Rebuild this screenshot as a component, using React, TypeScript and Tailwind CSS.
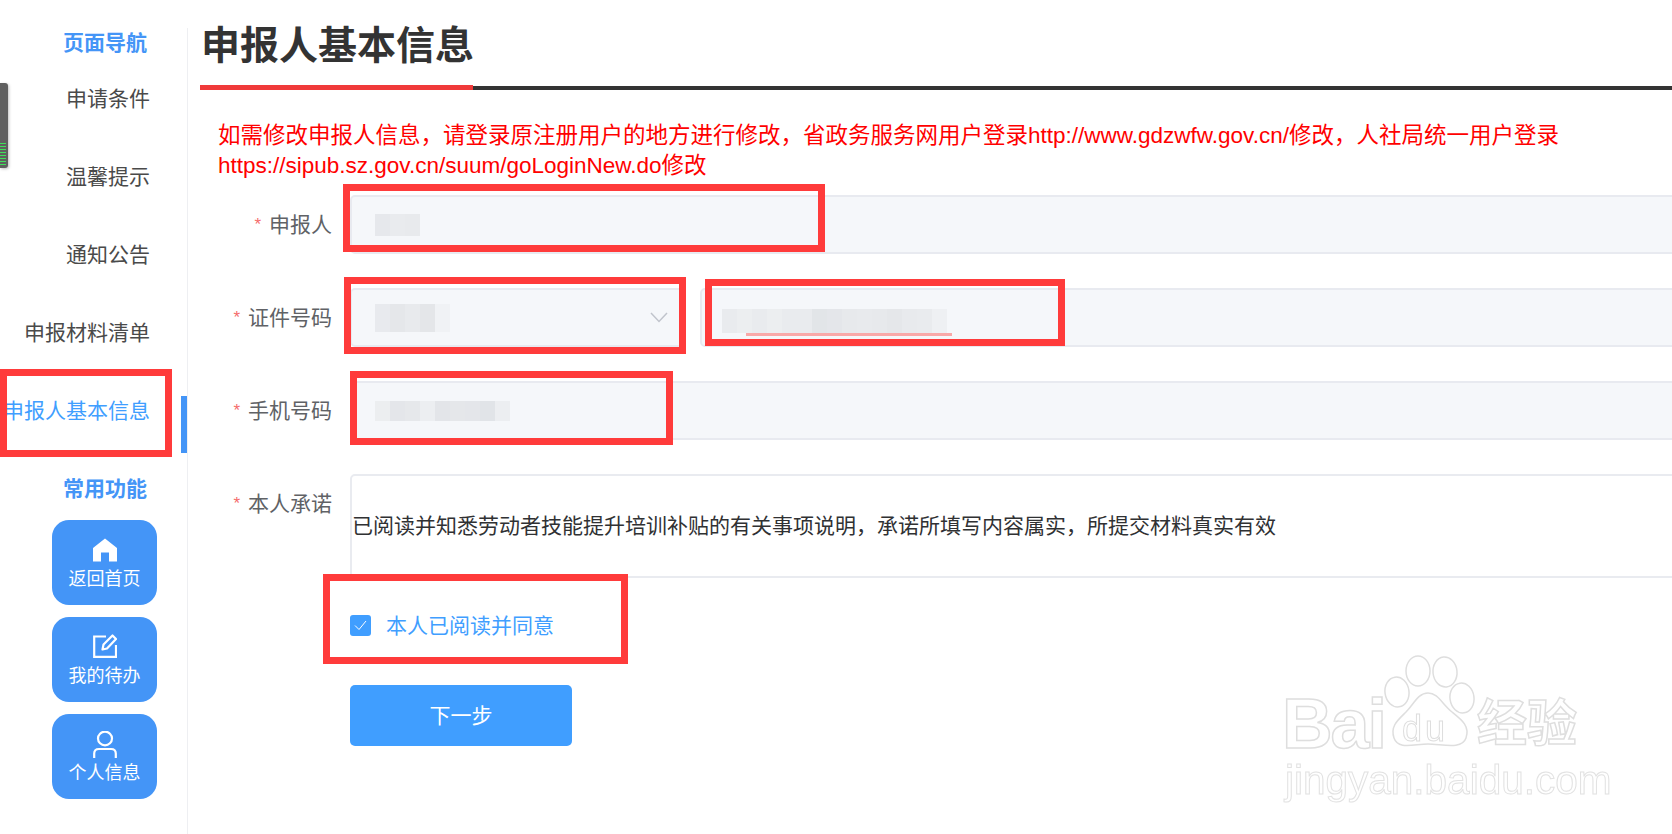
import React from "react";

const FONT = "font-['Liberation_Sans','Noto_Sans_CJK_SC',sans-serif]";

function Frame({ className }: { className: string }) {
  return <div className={`absolute border-[7px] border-[#ff3b3b] pointer-events-none ${className}`} />;
}

function Label({ text }: { text: string }) {
  return (
    <div className="w-[144px] h-[59px] shrink-0 flex items-center justify-end pt-[1px] text-[21px] text-[#606266]">
      <span className="text-[#f56c6c] mr-[8px] text-[17px]">*</span>
      {text}
    </div>
  );
}

function Smudge({ cells, h }: { cells: string[]; h: number }) {
  return (
    <div className="flex blur-[0.6px]" style={{ height: h }}>
      {cells.map((c, i) => (
        <div key={i} className="w-[15px] h-full" style={{ background: c }} />
      ))}
    </div>
  );
}

function Field({ children, className = "" }: { children?: React.ReactNode; className?: string }) {
  return (
    <div className={`h-[59px] bg-[#f5f7fa] border-2 border-[#e8eaf0] rounded-[5px] flex items-center pl-[23px] ${className}`}>
      {children}
    </div>
  );
}

function NavItem({ text, active }: { text: string; active?: boolean }) {
  return (
    <div className={`relative h-[78px] flex items-center justify-end pr-[37px] pt-[2px] text-[21px] ${active ? "text-[#409eff]" : "text-[#4a4a4a]"}`}>
      {text}
      {active && <div className="absolute right-0 top-[25px] w-[6px] h-[57px] bg-[#4495f7]" />}
    </div>
  );
}

function Tool({ text, icon }: { text: string; icon: React.ReactNode }) {
  return (
    <div className="w-[105px] h-[85px] rounded-[17px] bg-[#4495f7] flex flex-col items-center pt-[18px] text-white text-[18px]">
      <div className="h-[24px] flex items-center">{icon}</div>
      <div className="leading-[26px] mt-[4px]">{text}</div>
    </div>
  );
}

const HomeIcon = (
  <svg width="24" height="24" viewBox="0 0 24 24">
    <path fill="#fff" d="M12 0.5 L24 10 V23.5 H16 V14.5 H8 V23.5 H0 V10 Z" />
  </svg>
);

const EditIcon = (
  <svg className="-mt-[2px]" width="24" height="24" viewBox="0 0 24 24" fill="none" stroke="#fff">
    <path strokeWidth="2.2" d="M13 2.5 H1.2 V22.8 H23 V11" />
    <path strokeWidth="2.2" strokeLinejoin="round" d="M9.5 15.5 L10.5 10.5 L19.5 1.5 L23 5 L14 14.5 Z" />
  </svg>
);

const UserIcon = (
  <svg width="24" height="27" viewBox="0 0 24 27" fill="none" stroke="#fff" strokeWidth="2.2">
    <ellipse cx="12" cy="7.5" rx="7" ry="6.8" />
    <path d="M1.2 27 V22.5 Q1.2 18 6 18 H18 Q22.8 18 22.8 22.5 V27" />
  </svg>
);

const OUTLINE = "text-white font-bold font-['Liberation_Sans','Noto_Sans_CJK_SC',sans-serif]";

function Watermark() {
  return (
    <div className="absolute left-[1280px] top-[652px] w-[310px] h-[160px] blur-[0.5px] pointer-events-none">
      <span className={`absolute left-[2px] top-[42px] ${OUTLINE} text-[70px] leading-[60px] tracking-[-2px] [-webkit-text-stroke:1.5px_#dedede]`}>Bai</span>
      <svg className="absolute left-[100px] top-[0px]" width="100" height="100" viewBox="0 0 100 100" fill="#fff" stroke="#dedede" strokeWidth="1.5">
        <ellipse cx="17" cy="40" rx="12" ry="15" transform="rotate(-8 17 40)" />
        <ellipse cx="38" cy="19" rx="12" ry="15" />
        <ellipse cx="65" cy="20" rx="12" ry="15" transform="rotate(-6 65 20)" />
        <ellipse cx="82" cy="46" rx="12" ry="15" transform="rotate(-8 82 46)" />
        <path d="M48 41 C58 41 62 52 72 60 C82 68 90 74 86 86 C82 98 62 92 48 92 C34 92 18 98 14 86 C10 74 18 68 26 60 C34 52 38 41 48 41 Z" />
      </svg>
      <span className={`absolute left-[122px] top-[55px] ${OUTLINE} text-[36px] leading-[44px] font-normal tracking-[3px] [-webkit-text-stroke:1px_#dedede]`}>du</span>
      <span className={`absolute left-[197px] top-[41px] ${OUTLINE} text-[50px] leading-[62px] [-webkit-text-stroke:1.5px_#dedede]`}>经验</span>
      <span className={`absolute left-[5px] top-[103px] ${OUTLINE} text-[40.5px] leading-[50px] font-normal [-webkit-text-stroke:1px_#e2e2e2]`}>jingyan.baidu.com</span>
    </div>
  );
}

export default function App() {
  return (
    <div className={`relative w-[1672px] h-[834px] overflow-hidden bg-white flex ${FONT}`}>
      <aside className="w-[188px] shrink-0 mt-[28px] border-r border-[#eeeff2]">
        <div className="h-[30px] leading-[30px] pl-[63px] text-[21px] font-bold text-[#4495f7]">页面导航</div>
        <div className="mt-[1px]">
          <NavItem text="申请条件" />
          <NavItem text="温馨提示" />
          <NavItem text="通知公告" />
          <NavItem text="申报材料清单" />
          <NavItem text="申报人基本信息" active />
        </div>
        <div className="mt-[25px] h-[30px] leading-[30px] pl-[63px] text-[21px] font-bold text-[#4495f7]">常用功能</div>
        <div className="mt-[16px] ml-[52px] flex flex-col gap-[12px]">
          <Tool text="返回首页" icon={HomeIcon} />
          <Tool text="我的待办" icon={EditIcon} />
          <Tool text="个人信息" icon={UserIcon} />
        </div>
      </aside>

      <main className="flex-1 min-w-0 overflow-hidden">
        <div className="h-[85px] pl-[13px] pt-[16px]">
          <h1 className="text-[39px] leading-[60px] font-bold text-[#333]">申报人基本信息</h1>
        </div>
        <div className="flex items-start pl-[12px]">
          <div className="w-[273px] h-[5px] bg-[#f03a3a]" />
          <div className="flex-1 h-[4px] mt-[1px] bg-[#333]" />
        </div>
        <p className="mt-[31px] ml-[30px] w-[1420px] text-[22.5px] leading-[30px] text-[#ff0000]">
          如需修改申报人信息&#xFF0C;请登录原注册用户的地方进行修改&#xFF0C;省政务服务网用户登录http://www.gdzwfw.gov.cn/修改&#xFF0C;人社局统一用户登录
          <br />
          https://sipub.sz.gov.cn/suum/goLoginNew.do修改
        </p>

        <div className="mt-[14px] flex flex-col gap-[34px] -mr-[30px]">
          <div className="flex">
            <Label text="申报人" />
            <Field className="ml-[18px] flex-1">
              <Smudge h={22} cells={["#e6e8ec", "#e9ebee", "#e8eaed"]} />
            </Field>
          </div>
          <div className="flex">
            <Label text="证件号码" />
            <Field className="ml-[18px] w-[336px] justify-between pr-[16px]">
              <Smudge h={28} cells={["#e8eaee", "#e5e7ea", "#e8eaed", "#e4e6e9", "#f0f2f5"]} />
              <svg width="18" height="11" viewBox="0 0 18 11" fill="none" stroke="#c0c4cc" strokeWidth="1.5">
                <path d="M1 1 L9 9.5 L17 1" />
              </svg>
            </Field>
            <Field className="ml-[14px] flex-1 !pl-[20px]">
              <div className="relative mt-[6px]">
                <Smudge h={24} cells={["#e9ebee", "#eceef0", "#e9ebee", "#eceef0", "#e9ebee", "#e9ebee", "#e2e5e8", "#e4e6ea", "#e7e9ec", "#e8eaed", "#e7e9ec", "#e5e7ea", "#e8eaed", "#e9ebee", "#eef0f3"]} />
                <div className="absolute left-[24px] top-[24px] w-[206px] h-[3px] bg-[#f9a8a8]" />
              </div>
            </Field>
          </div>
          <div className="flex">
            <Label text="手机号码" />
            <Field className="ml-[18px] flex-1">
              <Smudge h={20} cells={["#eceef0", "#e4e6ea", "#e6e8eb", "#eceef1", "#e3e5e9", "#e5e7ea", "#e4e6ea", "#e1e4e8", "#eceef1"]} />
            </Field>
          </div>
          <div className="flex">
            <Label text="本人承诺" />
            <div className="ml-[18px] flex-1 h-[104px] border-2 border-[#e9ebf0] rounded-[5px] flex items-center pb-[1px] text-[21px] text-[#303133]">
              已阅读并知悉劳动者技能提升培训补贴的有关事项说明&#xFF0C;承诺所填写内容属实&#xFF0C;所提交材料真实有效
            </div>
          </div>
        </div>

        <div className="mt-[37px] ml-[162px] flex items-center">
          <div className="w-[21px] h-[21px] rounded-[3px] bg-[#409eff] flex items-center justify-center">
            <svg width="13" height="11" viewBox="0 0 13 11" fill="none" stroke="#fff" strokeWidth="1">
              <path d="M1 5.5 L5 9.5 L12 1" />
            </svg>
          </div>
          <span className="ml-[15px] text-[21px] leading-[21px] text-[#409eff]">本人已阅读并同意</span>
        </div>

        <div className="mt-[49px] ml-[162px] w-[222px] h-[61px] rounded-[5px] bg-[#409eff] text-white text-[21px] flex items-center justify-center">
          下一步
        </div>
      </main>

      <div className="absolute left-0 top-[83px] w-[8px] h-[85px] bg-[#5f5f5f] rounded-r-[3px] shadow-[1px_1px_3px_rgba(0,0,0,0.25)] flex flex-col justify-end gap-[1.5px] pb-[3px] pr-[2px]">
        {[0, 1, 2, 3, 4, 5, 6, 7].map((i) => (
          <div key={i} className="h-[1.5px] bg-[#3fe05a]" />
        ))}
      </div>

      <Watermark />

      <Frame className="left-0 top-[369px] w-[172px] h-[88px]" />
      <Frame className="left-[343px] top-[184px] w-[482px] h-[68px]" />
      <Frame className="left-[344px] top-[277px] w-[342px] h-[77px]" />
      <Frame className="left-[705px] top-[279px] w-[360px] h-[67px]" />
      <Frame className="left-[350px] top-[371px] w-[323px] h-[74px]" />
      <Frame className="left-[323px] top-[574px] w-[305px] h-[90px]" />
    </div>
  );
}
